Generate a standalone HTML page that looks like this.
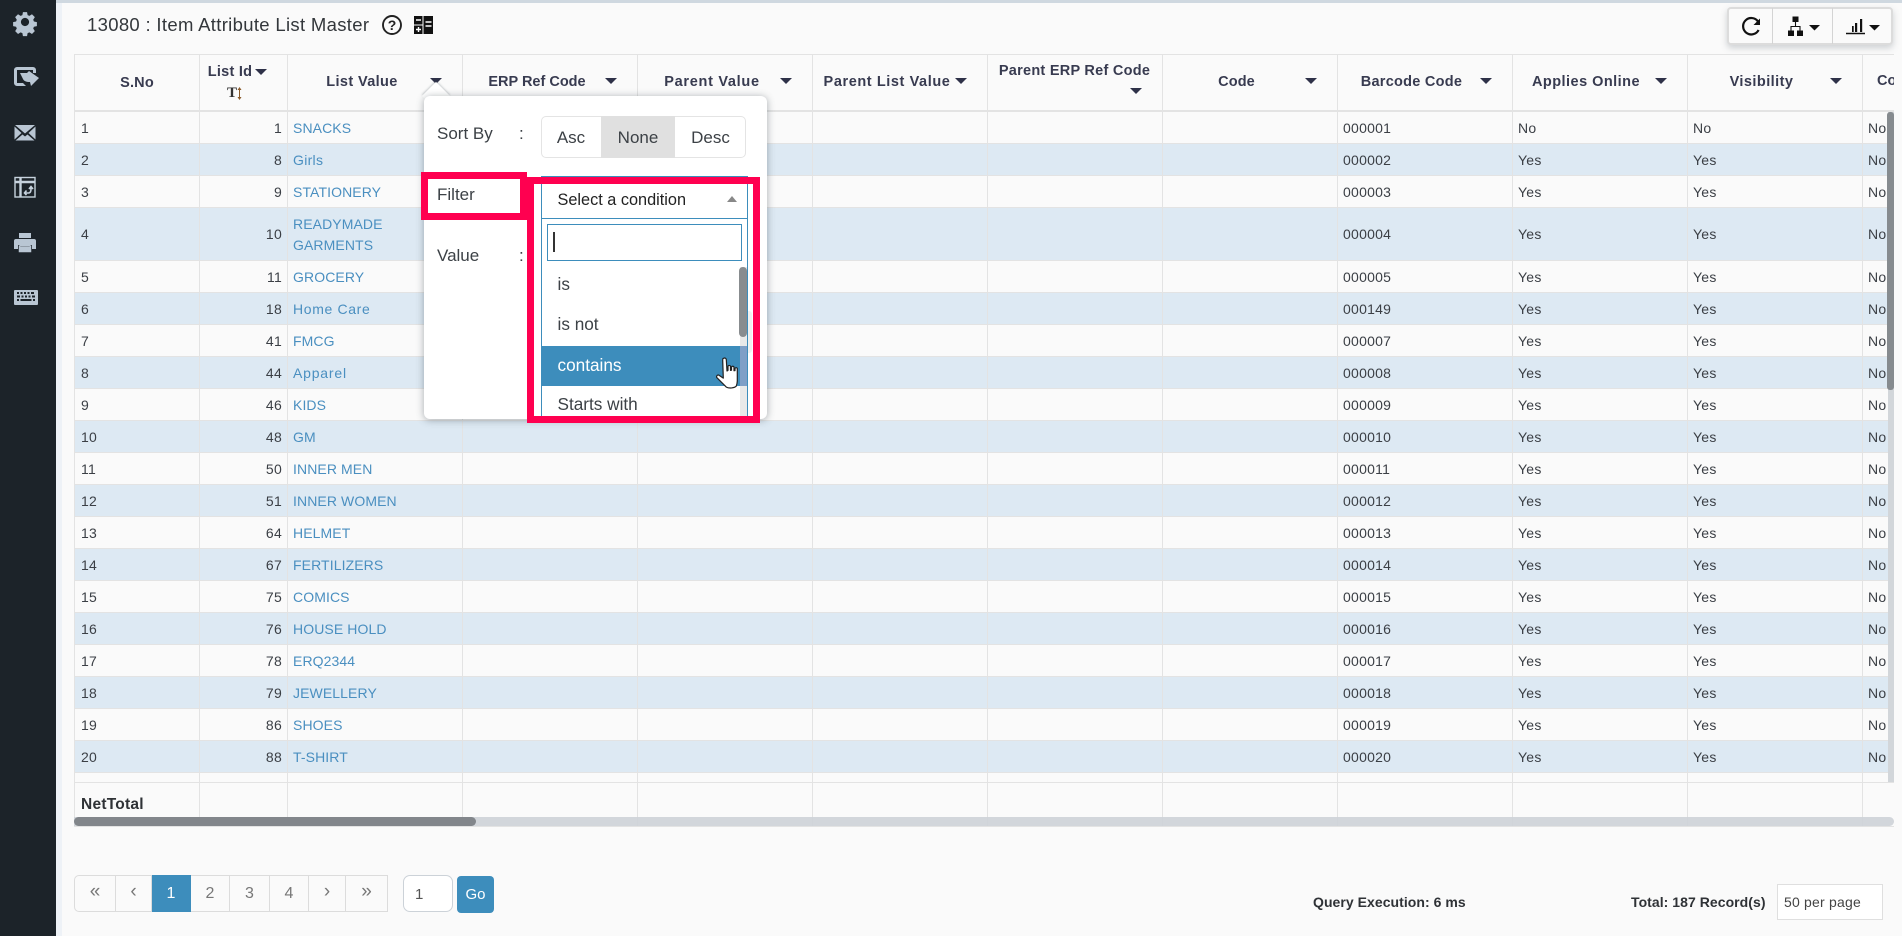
<!DOCTYPE html>
<html><head><meta charset="utf-8"><title>Item Attribute List Master</title>
<style>
html,body{margin:0;padding:0;width:1902px;height:936px;overflow:hidden;background:#fafafa;font-family:"Liberation Sans",Arial,sans-serif;color:#3b3f45}
*{box-sizing:border-box}
.a{position:absolute}
#side{left:0;top:0;width:56px;height:936px;background:#1c2329}
#gut{left:56px;top:0;width:6px;height:936px;background:#eef2f7}
#top{left:56px;top:0;width:1846px;height:3px;background:#cfd8e0}
#panel{left:62px;top:3px;width:1840px;height:933px;background:#fafafa;border-top-left-radius:4px}
#title{left:87px;top:14px;font-size:18.5px;line-height:22px;color:#33373b;letter-spacing:.32px;white-space:nowrap}
#wrap{left:74px;top:54px;width:1820px;height:773px;overflow:hidden}
table{border-collapse:separate;border-spacing:0;table-layout:fixed;width:1914px;font-size:14px;letter-spacing:.25px}
td,th{padding:0;border-right:1px solid #e3e3e3;border-bottom:1px solid #e3e3e3;background:#fafafa;line-height:21px;overflow:hidden;font-weight:400;white-space:nowrap}
td{padding-top:1px}
td:first-child,th:first-child{border-left:1px solid #e3e3e3}
thead th{border-top:1px solid #e3e3e3;border-bottom:2px solid #e3e3e3;height:58px}
tr.s td{background:#dde9f3}
td:nth-child(1){padding-left:6px}
td:nth-child(2){text-align:right;padding-right:5px}
td:nth-child(3){padding-left:5px;color:#4a8fc0;white-space:normal;letter-spacing:.1px}
td:nth-child(n+4){padding-left:5px}
tbody tr{height:32px}
.h{position:absolute;font-weight:700;font-size:14.5px;color:#383b50;white-space:nowrap;transform:translate(-50%,-50%);line-height:16px}
.c{position:absolute;width:0;height:0;border-left:6px solid transparent;border-right:6px solid transparent;border-top:6.5px solid #2e3148;transform:translate(-50%,-50%)}
#pop{left:424px;top:96px;width:343px;height:323px;background:#fff;border-radius:6px;box-shadow:0 1px 8px rgba(60,70,80,.45);font-size:17px;color:#3c4146}
#arrow{left:426px;top:86px;width:20px;height:20px;background:#fff;transform:rotate(45deg);box-shadow:-1px -1px 2px rgba(60,70,80,.25)}
.lb{position:absolute;font-size:17px;line-height:20px;color:#3c4146;white-space:nowrap}
.bt{position:absolute;top:116px;height:42px;text-align:center;line-height:43px;font-size:17px;color:#3c4146}
.opt{position:absolute;left:557.5px;font-size:17.2px;line-height:20px;color:#3c4146;white-space:nowrap}
.r{position:absolute;border:7px solid #ff0050}
.p{position:absolute;top:875px;height:37px;background:#fafafa;border:1px solid #dcdcdc;border-left-width:0;text-align:center;line-height:35px;font-size:16px;color:#777}
.g{font-size:19px;line-height:32px}
.f{position:absolute;font-size:14px;font-weight:700;color:#2f3236;white-space:nowrap;line-height:16px;letter-spacing:.05px}
</style></head><body>
<div class="a" id="side"></div><div class="a" id="gut"></div><div class="a" id="top"></div><div class="a" id="panel"></div>

<svg class="a" style="left:0;top:0" width="56" height="320" fill="#b9c6d3">
<g transform="translate(25 22) scale(.82)"><path fill-rule="evenodd" d="M-2.500-12h5l.7 3.600 2.200 1 3.100-2 3.500 3.500-2 3.100.9 2.200 3.600.7v5l-3.600.7-.9 2.200 2 3.100-3.500 3.500-3.100-2-2.200 1-.7 3.600h-5l-.7-3.600-2.200-1-3.100 2-3.500-3.500 2-3.100-.9-2.200-3.600-.7v-5l3.600-.7.9-2.200-2-3.100 3.500-3.500 3.100 2 2.200-1zM0-5a5 5 0 1 0 .01 0z"/></g>
<path d="M17 67h16a3 3 0 0 1 3 3v3h-3v-3H17v13h6l3 3h-9a3 3 0 0 1-3-3V70a3 3 0 0 1 3-3z"/>
<path d="M20 73h7l2-2 10 7-8 8-1-4c-4 0-6-1-7-3z"/>
<path d="M15 125h20l-10 8.500zM14.500 126.500l7 6.500-7 6.500zM35.500 126.500l-7 6.500 7 6.500zM22.500 134.500l2.500 2 2.500-2 7 6H15.500z"/>
<g fill="none" stroke="#c6d2dd"><rect x="15" y="177.500" width="20" height="19.500" stroke-width="1.400"/><path d="M15 182h20M20.500 177.500V197" stroke-width="2.400"/><path d="M25 193h3.500c2 0 2.500-1.500 2.500-4v-2M29 189l2-2.500 2 2.500M26.500 190.500l-2 2.500 2 2" stroke-width="1.600"/></g>
<path d="M19 233h12v5H19zM16 239h18a2 2 0 0 1 2 2v8h-4v-4H18v4h-4v-8a2 2 0 0 1 2-2z"/><path d="M20 247h10v4H20zM20 245h10v1H20z"/><rect x="19.500" y="246" width="11" height="5.500" fill="none" stroke="#b9c6d3" stroke-width="1.500"/>
<path fill-rule="evenodd" d="M15 290h22a1 1 0 0 1 1 1v13a1 1 0 0 1-1 1H15a1 1 0 0 1-1-1v-13a1 1 0 0 1 1-1zM17 292v2h2v-2zM20.500 292v2h2v-2zM24 292v2h2v-2zM27.500 292v2h2v-2zM31 292v2h3v-2zM17 295.500v2h3v-2zM21.500 295.500v2h2v-2zM25 295.500v2h2v-2zM28.500 295.500v2h2v-2zM32 295.500v2h3v-2zM17 299v2h2v-2zM20.500 299v2h11v-2zM33 299v2h2v-2z"/>
</svg>

<div class="a" id="title">13080 : Item Attribute List Master</div>
<svg class="a" style="left:380px;top:12px" width="60" height="26">
<circle cx="12" cy="13" r="9" fill="none" stroke="#222" stroke-width="1.900"/>
<text x="12" y="18" text-anchor="middle" font-family="Liberation Sans" font-weight="700" font-size="14" fill="#222">?</text>
<path fill="#111" d="M34 4h8.500v8.500H34zM34 13.500h8.500V22H34zM43.500 4H53v18h-9.500z"/>
<path stroke="#fff" stroke-width="1.400" d="M36 8h5M36 17.500h5M38.500 15v5M45.500 10h6M45.500 14h6"/>
</svg>

<div class="a" style="left:1727px;top:7px;width:166px;height:38px;background:#fafafa;border:2px solid #dcdcdc;border-radius:4px;box-shadow:0 3px 7px rgba(90,100,110,.28)"></div>
<div class="a" style="left:1772px;top:8px;width:1px;height:36px;background:#d4d4d4"></div>
<div class="a" style="left:1832px;top:8px;width:1px;height:36px;background:#d4d4d4"></div>
<svg class="a" style="left:1735px;top:10px" width="160" height="32">
<path d="M23 11.500a8.200 8.200 0 1 0 .6 8.500" fill="none" stroke="#111" stroke-width="2.200"/><path d="M25 8.500v6.500h-6.500z" fill="#111"/>
<path fill="#111" d="M57.500 6.500h6v5.500h-6zM53 20.500h6V26h-6zM62 20.500h6V26h-6z"/><path d="M60.500 12v4.500M56 20.500v-4h9v4" stroke="#111" fill="none" stroke-width="1.100"/>
<path fill="#111" d="M74 15h11l-5.500 5.500z"/>
<path fill="#111" d="M117 16h1.700v6H117zM120 13h2.200v9H120zM125 9h2.200v13H125z"/><path d="M111 23.500h19" stroke="#111" stroke-width="1.500"/>
<path fill="#111" d="M134 15h11l-5.500 5.500z"/>
</svg>

<div class="a" id="wrap">
<table>
<colgroup><col style="width:126px"><col style="width:88px"><col style="width:175px"><col style="width:175px"><col style="width:175px"><col style="width:175px"><col style="width:175px"><col style="width:175px"><col style="width:175px"><col style="width:175px"><col style="width:175px"><col style="width:125px"></colgroup>
<thead><tr><th></th><th></th><th></th><th></th><th></th><th></th><th></th><th></th><th></th><th></th><th></th><th></th></tr></thead>
<tbody>
<tr><td>1</td><td>1</td><td>SNACKS</td><td></td><td></td><td></td><td></td><td></td><td>000001</td><td>No</td><td>No</td><td>No</td></tr>
<tr class="s"><td>2</td><td>8</td><td style="letter-spacing:.3px">Girls</td><td></td><td></td><td></td><td></td><td></td><td>000002</td><td>Yes</td><td>Yes</td><td>No</td></tr>
<tr><td>3</td><td>9</td><td>STATIONERY</td><td></td><td></td><td></td><td></td><td></td><td>000003</td><td>Yes</td><td>Yes</td><td>No</td></tr>
<tr class="s" style="height:53px"><td>4</td><td>10</td><td>READYMADE GARMENTS</td><td></td><td></td><td></td><td></td><td></td><td>000004</td><td>Yes</td><td>Yes</td><td>No</td></tr>
<tr><td>5</td><td>11</td><td>GROCERY</td><td></td><td></td><td></td><td></td><td></td><td>000005</td><td>Yes</td><td>Yes</td><td>No</td></tr>
<tr class="s"><td>6</td><td>18</td><td style="letter-spacing:.65px">Home Care</td><td></td><td></td><td></td><td></td><td></td><td>000149</td><td>Yes</td><td>Yes</td><td>No</td></tr>
<tr><td>7</td><td>41</td><td>FMCG</td><td></td><td></td><td></td><td></td><td></td><td>000007</td><td>Yes</td><td>Yes</td><td>No</td></tr>
<tr class="s"><td>8</td><td>44</td><td style="letter-spacing:.8px">Apparel</td><td></td><td></td><td></td><td></td><td></td><td>000008</td><td>Yes</td><td>Yes</td><td>No</td></tr>
<tr><td>9</td><td>46</td><td>KIDS</td><td></td><td></td><td></td><td></td><td></td><td>000009</td><td>Yes</td><td>Yes</td><td>No</td></tr>
<tr class="s"><td>10</td><td>48</td><td>GM</td><td></td><td></td><td></td><td></td><td></td><td>000010</td><td>Yes</td><td>Yes</td><td>No</td></tr>
<tr><td>11</td><td>50</td><td>INNER MEN</td><td></td><td></td><td></td><td></td><td></td><td>000011</td><td>Yes</td><td>Yes</td><td>No</td></tr>
<tr class="s"><td>12</td><td>51</td><td>INNER WOMEN</td><td></td><td></td><td></td><td></td><td></td><td>000012</td><td>Yes</td><td>Yes</td><td>No</td></tr>
<tr><td>13</td><td>64</td><td>HELMET</td><td></td><td></td><td></td><td></td><td></td><td>000013</td><td>Yes</td><td>Yes</td><td>No</td></tr>
<tr class="s"><td>14</td><td>67</td><td>FERTILIZERS</td><td></td><td></td><td></td><td></td><td></td><td>000014</td><td>Yes</td><td>Yes</td><td>No</td></tr>
<tr><td>15</td><td>75</td><td>COMICS</td><td></td><td></td><td></td><td></td><td></td><td>000015</td><td>Yes</td><td>Yes</td><td>No</td></tr>
<tr class="s"><td>16</td><td>76</td><td>HOUSE HOLD</td><td></td><td></td><td></td><td></td><td></td><td>000016</td><td>Yes</td><td>Yes</td><td>No</td></tr>
<tr><td>17</td><td>78</td><td>ERQ2344</td><td></td><td></td><td></td><td></td><td></td><td>000017</td><td>Yes</td><td>Yes</td><td>No</td></tr>
<tr class="s"><td>18</td><td>79</td><td>JEWELLERY</td><td></td><td></td><td></td><td></td><td></td><td>000018</td><td>Yes</td><td>Yes</td><td>No</td></tr>
<tr><td>19</td><td>86</td><td>SHOES</td><td></td><td></td><td></td><td></td><td></td><td>000019</td><td>Yes</td><td>Yes</td><td>No</td></tr>
<tr class="s"><td>20</td><td>88</td><td>T-SHIRT</td><td></td><td></td><td></td><td></td><td></td><td>000020</td><td>Yes</td><td>Yes</td><td>No</td></tr>
<tr style="height:10px"><td style="padding-top:0"></td><td style="padding-top:0"></td><td style="padding-top:0"></td><td style="padding-top:0"></td><td style="padding-top:0"></td><td style="padding-top:0"></td><td style="padding-top:0"></td><td style="padding-top:0"></td><td style="padding-top:0"></td><td style="padding-top:0"></td><td style="padding-top:0"></td><td style="padding-top:0"></td></tr>
<tr style="height:44px"><td style="font-weight:700;color:#2f3236;vertical-align:top;padding-top:11px;font-size:15.5px">NetTotal</td><td></td><td></td><td></td><td></td><td></td><td></td><td></td><td></td><td></td><td></td><td></td></tr>
</tbody></table>
</div>

<span class="h" style="left:137px;top:82.5px;letter-spacing:.2px">S.No</span>
<span class="h" style="left:230px;top:72px;letter-spacing:.25px">List Id</span><i class="c" style="left:261px;top:72px"></i>
<span class="a" style="left:227px;top:85px;font:700 15px/16px 'Liberation Serif',serif;color:#333">T</span>
<svg class="a" style="left:237px;top:87px" width="5" height="13"><path d="M2.500 0l2 3H.5zM2.500 13l2-3H.5zM2 3h1v7H2z" fill="#8a5a2a"/></svg>
<span class="h" style="left:362px;top:81.500px;letter-spacing:.37px">List Value</span><i class="c" style="left:436px;top:81px"></i>
<span class="h" style="left:537px;top:81.500px">ERP Ref Code</span><i class="c" style="left:611px;top:81px"></i>
<span class="h" style="left:712px;top:81.500px;letter-spacing:.7px">Parent Value</span><i class="c" style="left:786px;top:81px"></i>
<span class="h" style="left:887px;top:81.500px;letter-spacing:.59px">Parent List Value</span><i class="c" style="left:961px;top:81px"></i>
<span class="h" style="left:1074.500px;top:70.500px;letter-spacing:.26px">Parent ERP Ref Code</span><i class="c" style="left:1136px;top:91px"></i>
<span class="h" style="left:1236.500px;top:81.500px;letter-spacing:.1px">Code</span><i class="c" style="left:1311px;top:81px"></i>
<span class="h" style="left:1411.500px;top:81.500px;letter-spacing:.27px">Barcode Code</span><i class="c" style="left:1486px;top:81px"></i>
<span class="h" style="left:1586px;top:81.500px;letter-spacing:.47px">Applies Online</span><i class="c" style="left:1661px;top:81px"></i>
<span class="h" style="left:1761.500px;top:81.500px;letter-spacing:.45px">Visibility</span><i class="c" style="left:1836px;top:81px"></i>
<span class="a" style="left:1877px;top:73px;width:17px;overflow:hidden;font-weight:700;font-size:14.5px;line-height:16px;color:#383b50">Co</span>

<div class="a" style="left:1888px;top:112px;width:6px;height:670px;background:#d2d6da"></div>
<div class="a" style="left:1887px;top:112px;width:7px;height:278px;background:#868b8f;border-radius:3px"></div>
<div class="a" style="left:74px;top:817px;width:1820px;height:9px;background:rgba(205,210,215,.9);border-radius:0 5px 5px 0"></div>
<div class="a" style="left:74px;top:817px;width:402px;height:9px;background:rgba(125,130,135,.95);border-radius:5px"></div>

<!-- popover -->
<div class="a" id="arrow"></div>
<div class="a" id="pop"></div>
<span class="lb" style="left:437px;top:124px">Sort By</span>
<span class="lb" style="left:519px;top:124px">:</span>
<span class="lb" style="left:437px;top:185px">Filter</span>
<span class="lb" style="left:519px;top:185px">:</span>
<span class="lb" style="left:437px;top:246px">Value</span>
<span class="lb" style="left:519px;top:246px">:</span>
<div class="a" style="left:541px;top:116px;width:205px;height:42px;border:1px solid #e4e4e4;border-radius:5px"></div>
<div class="bt" style="left:541px;width:60px">Asc</div>
<div class="bt" style="left:601px;width:74px;background:#e0e0e0">None</div>
<div class="bt" style="left:675px;width:71px">Desc</div>

<div class="a" style="left:541px;top:176px;width:207px;height:246px;background:#fff;border:1px solid #3d8dbc"></div>
<div class="a" style="left:541px;top:218px;width:207px;height:1px;background:#3d8dbc"></div>
<span class="a" style="left:557.500px;top:189.500px;font-size:16.300px;line-height:20px;color:#222;white-space:nowrap">Select a condition</span>
<div class="a" style="left:727px;top:196px;width:0;height:0;border-left:5px solid transparent;border-right:5px solid transparent;border-bottom:6px solid #888"></div>
<div class="a" style="left:547px;top:224px;width:195px;height:37px;background:#fff;border:1px solid #3d8dbc"></div>
<div class="a" style="left:553px;top:232px;width:2px;height:20px;background:#333"></div>
<div class="a" style="left:542px;top:346px;width:205px;height:40px;background:#3d8dbc"></div>
<div class="a" style="left:740px;top:267px;width:7px;height:155px;background:#e9e9e9"></div>
<div class="a" style="left:740px;top:346px;width:7px;height:40px;background:#7f9fc7"></div>
<div class="a" style="left:739px;top:267px;width:8px;height:70px;background:#888c8f;border-radius:4px"></div>
<div class="a" style="left:748px;top:311px;width:4px;height:42px;background:#f1f1f1;border-radius:0 3px 3px 0"></div>
<span class="opt" style="top:274px">is</span>
<span class="opt" style="top:314px">is not</span>
<span class="opt" style="top:355px;color:#fff">contains</span>
<span class="opt" style="top:394px">Starts with</span>
<svg class="a" style="left:715px;top:356px" width="26" height="34"><path d="M8.500 2.500c1-1 2.500-.5 2.800 1l.7 11.500 1-.6v-4c.3-1.300 2.200-1.300 2.500 0v4l1-.2v-3c.3-1.300 2.200-1.300 2.500 0v3.500l1-.1v-2c.3-1.200 2-1.200 2.300 0v12c0 2.500-.5 4-1 5.500-2 2-7 2.500-10 1-2.500-2.500-6-6-9.500-9.500-.7-1.500.5-3 2-2.500l4.500 3-.6-18c0-.6 0-1.300.3-1.600z" fill="#fff" stroke="#222" stroke-width="1.200" stroke-linejoin="round"/></svg>

<div class="r" style="left:421px;top:172px;width:106px;height:48px"></div>
<div class="r" style="left:527px;top:177px;width:233px;height:245.500px"></div>

<!-- pagination -->
<div class="p g" style="left:74px;width:42px;border-left-width:1px;border-radius:5px 0 0 5px">«</div>
<div class="p g" style="left:116px;width:36px">‹</div>
<div class="p" style="left:152px;width:39px;background:#3d8dbc;border-color:#3d8dbc;color:#fff">1</div>
<div class="p" style="left:191px;width:39px">2</div>
<div class="p" style="left:230px;width:40px">3</div>
<div class="p" style="left:270px;width:39px">4</div>
<div class="p g" style="left:309px;width:37px">›</div>
<div class="p g" style="left:346px;width:42px">»</div>
<div class="a" style="left:403px;top:875px;width:50px;height:37px;background:#fff;border:1px solid #ccd2d8;border-radius:7px;font-size:15px;line-height:37px;padding-left:11px;color:#555">1</div>
<div class="a" style="left:457px;top:876px;width:37px;height:37px;background:#3d8dbc;border-radius:4px;color:#fff;font-size:15px;line-height:37px;text-align:center">Go</div>

<span class="f" style="left:1313px;top:894px">Query Execution: 6 ms</span>
<span class="f" style="left:1631px;top:894px">Total: 187 Record(s)</span>
<div class="a" style="left:1777px;top:884px;width:106px;height:36px;background:#fff;border:1px solid #dfdfdf;font-size:14px;line-height:35px;padding-left:6px;color:#444;letter-spacing:.2px">50 per page</div>
</body></html>
